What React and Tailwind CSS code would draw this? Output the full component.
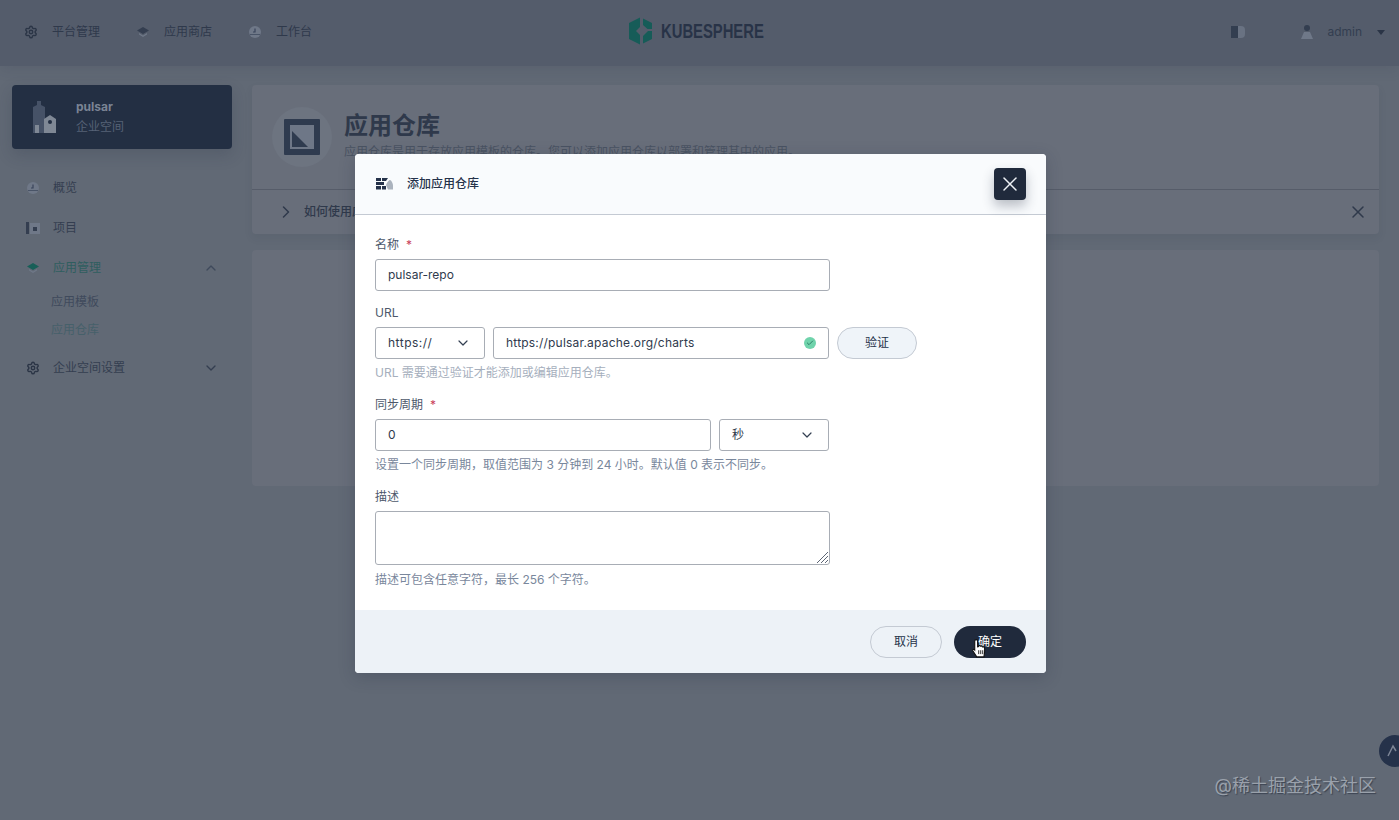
import { ChevronDown, ChevronUp, ChevronRight, X, Check, Settings } from "lucide-react";

function Label({ children, required }) {
  return (
    <div className="h-5 mb-[5px] text-[12px] leading-[22px] text-[#4d586b]">
      {children}
      {required && <span className="ml-[7px] text-[#c9405a]">*</span>}
    </div>
  );
}

function Hint({ children, light, className = "" }) {
  return (
    <div className={`h-5 text-[12px] leading-5 ${light ? "text-[#a6afbd]" : "text-[#79879c]"} ${className}`}>
      {children}
    </div>
  );
}

function Select({ value, className = "" }) {
  return (
    <div className={`w-[110px] h-8 flex items-center justify-between pl-3 pr-[13px] rounded-[3px] border border-[#a8adb5] text-[12px] text-[#2f3a4d] ${className}`}>
      <span>{value}</span>
      <ChevronDown size={16} strokeWidth={1.8} className="text-[#333f52]" />
    </div>
  );
}

function TextField({ value, className = "", children }) {
  return (
    <div className={`h-8 flex items-center justify-between px-3 rounded-[3px] border border-[#a8adb5] text-[12px] text-[#2f3a4d] ${className}`}>
      <span>{value}</span>
      {children}
    </div>
  );
}

function NavItem({ icon, label, active, chevron }) {
  return (
    <div className="h-10 flex items-center pl-[25px] pr-[25px]">
      <span className="w-[16px] h-[16px] flex items-center justify-center">{icon}</span>
      <span className={`ml-3 text-[12px] ${active ? "text-[#2f5e5f]" : "text-[#343e50]"}`}>{label}</span>
      {chevron === "up" && <ChevronUp size={16} className="ml-auto text-[#3f4a5b]" />}
      {chevron === "down" && <ChevronDown size={16} className="ml-auto text-[#343e50]" />}
    </div>
  );
}

function DotIcon() {
  return (
    <svg width="14" height="14" viewBox="0 0 14 14">
      <circle cx="7" cy="7" r="6" fill="#6f7888" />
      <path d="M7 3.500v3.500H5" stroke="#39445a" strokeWidth="1.2" fill="none" />
      <path d="M2 9.500h10" stroke="#495467" strokeWidth="1" />
    </svg>
  );
}

function CapIcon({ color = "#343e50" }) {
  return (
    <svg width="14" height="14" viewBox="0 0 14 14">
      <path d="M7 2l6 3.500L7 9 1 5.500z" fill={color} />
      <path d="M3 9.500L7 12l4-2.500V8L7 10.500 3 8z" fill="#6f7888" />
    </svg>
  );
}

export default function App() {
  return (
    <div
      className="relative w-full h-screen overflow-hidden bg-[#616975]"
      style={{ fontFamily: 'Inter, "Noto Sans CJK SC", sans-serif' }}
    >
      {/* top bar */}
      <header className="relative h-[66px] flex items-center justify-between bg-[#545c6b] pl-6 pr-[14px] pb-[2px] shadow-[0_4px_12px_rgba(40,50,70,0.12)]">
        <nav className="flex items-center gap-9 text-[12px] text-[#2f394b]">
          <div className="flex items-center gap-[14px]">
            <Settings size={14} strokeWidth={2.4} className="text-[#2b3546]" />
            <span>平台管理</span>
          </div>
          <div className="flex items-center gap-[14px]">
            <CapIcon />
            <span>应用商店</span>
          </div>
          <div className="flex items-center gap-[14px]">
            <DotIcon />
            <span>工作台</span>
          </div>
        </nav>
        <div className="absolute left-[628px] top-[17px] flex items-center gap-[8px]">
          <svg width="25" height="28" viewBox="0 0 25 28">
            <path d="M12 0.500L1 6v16l11 5.500V18l-4-4 4-4z" fill="#165c58" />
            <path d="M15 1.500l9 4.500v6h-4.500L15 8z" fill="#165c58" />
            <path d="M20 14h4v8l-9 4.500V19z" fill="#165c58" />
          </svg>
          <span
            className="text-[20px] leading-7 font-bold text-[#283347] scale-x-[0.74] origin-left"
            style={{ fontFamily: '"Liberation Sans", sans-serif' }}
          >
            KUBESPHERE
          </span>
        </div>
        <div className="flex items-center text-[12px] text-[#333e50]">
          <svg width="14" height="12" viewBox="0 0 14 12">
            <rect x="0" y="0" width="7" height="12" fill="#333e50" />
            <path d="M7 0h3a4 4 0 014 4v4a4 4 0 01-4 4H7z" fill="#697282" />
          </svg>
          <svg className="ml-[55px]" width="14" height="16" viewBox="0 0 14 16">
            <circle cx="7" cy="4" r="3" fill="#333e50" />
            <path d="M1 15l3-7h6l3 7z" fill="#6f7888" />
          </svg>
          <span className="ml-[13px]">admin</span>
          <span className="ml-[15px] w-0 h-0 border-x-[4px] border-x-transparent border-t-[5px] border-t-[#2a3446]" />
        </div>
      </header>

      <div className="flex pt-[19px] pl-3 pr-5">
        {/* sidebar */}
        <aside className="w-[220px] shrink-0">
          <div className="h-16 flex items-center pl-[19px] rounded-[4px] bg-[#232f43] shadow-[0_6px_16px_rgba(35,45,65,0.2)]">
            <svg width="26" height="36" viewBox="0 0 26 36">
              <path d="M2 34V8l4-2V2h4v4l4 2v26z" fill="#465267" />
              <rect x="4" y="26" width="4" height="8" fill="#7f8895" />
              <path d="M13 34V20l6-4 6 4v14z" fill="#7f8895" />
              <circle cx="19" cy="23" r="2" fill="#232f43" />
            </svg>
            <div className="ml-[19px]">
              <div className="text-[12px] leading-5 font-bold text-[#7b8494]">pulsar</div>
              <div className="text-[12px] leading-5 text-[#566276]">企业空间</div>
            </div>
          </div>
          <div className="mt-[19px] -mx-3 w-[244px]">
            <NavItem icon={<DotIcon />} label="概览" />
            <NavItem
              icon={
                <svg width="14" height="14" viewBox="0 0 14 14">
                  <rect x="0" y="1" width="3" height="12" fill="#343e50" />
                  <rect x="4" y="2" width="10" height="11" fill="#6f7888" />
                  <rect x="7" y="6" width="4" height="4" fill="#343e50" />
                </svg>
              }
              label="项目"
            />
            <NavItem icon={<CapIcon color="#185f58" />} label="应用管理" active chevron="up" />
            <div className="pl-[51px] pb-1 text-[12px]">
              <div className="h-7 leading-7 text-[#3f4a5c]">应用模板</div>
              <div className="h-7 leading-7 text-[#46606a]">应用仓库</div>
            </div>
            <NavItem icon={<Settings size={14} strokeWidth={2.4} className="text-[#2b3546]" />} label="企业空间设置" chevron="down" />
          </div>
        </aside>

        {/* main */}
        <main className="flex-1 ml-5">
          <section className="h-[149px] rounded-[4px] bg-[#686e7a] shadow-[0_4px_8px_rgba(40,50,70,0.08)]">
            <div className="h-[105px] flex items-center pl-5 border-b border-[#565c69]">
              <div className="w-[60px] h-[60px] rounded-[50%] bg-[#6d7480] flex items-center justify-center">
                <svg width="36" height="36" viewBox="0 0 36 36">
                  <rect x="0" y="0" width="36" height="36" rx="1" fill="#2f3b4f" />
                  <rect x="6" y="6" width="24" height="24" fill="#6e7787" />
                  <path d="M8 12l16 16H8z" fill="#2f3b4f" />
                </svg>
              </div>
              <div className="ml-3">
                <div className="text-[24px] leading-8 -mt-[5px] font-bold text-[#2f394b]">应用仓库</div>
                <div className="text-[12px] leading-4 mt-[2px] text-[#4a5362]">应用仓库是用于存放应用模板的仓库。您可以添加应用仓库以部署和管理其中的应用。</div>
              </div>
            </div>
            <div className="h-[43px] flex items-center pl-[24px] pr-[11px] text-[12px] font-medium text-[#2f394b]">
              <ChevronRight size={20} strokeWidth={1.8} className="text-[#2f394b]" />
              <span className="ml-2">如何使用应用仓库？</span>
              <X size={20} strokeWidth={1.8} className="ml-auto text-[#2f394b]" />
            </div>
          </section>
          <section className="mt-4 h-[236px] rounded-[4px] bg-[#686e7a]" />
        </main>
      </div>

      {/* dialog */}
      <div className="absolute left-[355px] top-[154px] w-[691px] h-[519px] flex flex-col rounded-[4px] bg-white overflow-hidden shadow-[0_4px_16px_rgba(35,45,65,0.25)]">
        <div className="h-[61px] shrink-0 flex items-center pl-[21px] bg-[#f9fbfd] border-b border-[#c4cad3]">
          <svg width="17" height="12" viewBox="0 0 17 12">
            <path d="M0 0h5v3H0zM6 0h6L10 3H6zM0 4h8v3H0zM0 8h5v3.500H0zM6 8h4v3.500H6z" fill="#25324a" />
            <path d="M10 7c1-3 3-5 4-5s3 3 3 6v3.500h-5z" fill="#abb3be" />
          </svg>
          <span className="ml-[14px] text-[12px] font-medium text-[#25324a]">添加应用仓库</span>
        </div>

        <div className="flex-1 pt-[19px] pl-5">
          <div className="w-[455px]">
            <Label required>名称</Label>
            <TextField value="pulsar-repo" />
          </div>
          <div className="mt-[11px]">
            <Label>URL</Label>
            <div className="flex items-center gap-2">
              <Select value="https://" className="tracking-[0.5px]" />
              <TextField value="https://pulsar.apache.org/charts" className="w-[336px] tracking-[0.2px]">
                <span className="w-3 h-3 rounded-full bg-[#6fd3ab] flex items-center justify-center">
                  <Check size={8} strokeWidth={3} className="text-[#2f7f68]" />
                </span>
              </TextField>
              <div className="w-20 h-8 flex items-center justify-center rounded-full border border-[#c4cad3] bg-[#eff4f9] text-[12px] text-[#25324a]">
                验证
              </div>
            </div>
            <Hint light className="mt-1">URL 需要通过验证才能添加或编辑应用仓库。</Hint>
          </div>
          <div className="mt-[11px]">
            <Label required>同步周期</Label>
            <div className="flex items-center gap-2">
              <TextField value="0" className="w-[336px]" />
              <Select value="秒" />
            </div>
            <Hint className="mt-1">设置一个同步周期，取值范围为 3 分钟到 24 小时。默认值 0 表示不同步。</Hint>
          </div>
          <div className="mt-[11px]">
            <Label>描述</Label>
            <div className="relative w-[455px] h-[54px] rounded-[3px] border border-[#a8adb5]">
              <svg className="absolute right-0 bottom-0" width="14" height="14" viewBox="0 0 14 14">
                <path d="M13 2L2 13M13 6l-7 7M13 10l-3 3" stroke="#5d6675" strokeWidth="1" />
              </svg>
            </div>
            <Hint className="mt-[5px]">描述可包含任意字符，最长 256 个字符。</Hint>
          </div>
        </div>

        <div className="h-[63px] shrink-0 flex items-center justify-end gap-3 pr-5 bg-[#edf2f7]">
          <div className="w-[72px] h-8 flex items-center justify-center rounded-full border border-[#c4cad3] text-[12px] text-[#25324a]">
            取消
          </div>
          <div className="w-[72px] h-8 flex items-center justify-center rounded-full bg-[#202a3c] text-[12px] text-white">
            确定
          </div>
        </div>
      </div>

      {/* dialog close */}
      <div className="absolute left-[994px] top-[168px] w-8 h-8 flex items-center justify-center rounded-[4px] bg-[#202a3c] shadow-[0_6px_12px_rgba(35,45,65,0.3)]">
        <X size={24} strokeWidth={1.5} className="text-[#eef1f5]" />
      </div>

      {/* mouse pointer */}
      <svg className="absolute left-[971px] top-[638px]" width="17" height="20" viewBox="0 0 14 18">
        <path
          d="M4 1.500c.8 0 1.300.6 1.300 1.400V8l1-.2V7c.8-.5 1.500-.3 1.800.5.8-.4 1.500-.2 1.800.6.8-.3 1.600 0 1.700 1v3.400L11 17H4.500L1 11.500c-.4-.8.500-1.700 1.300-1l.4.400V2.900c0-.8.500-1.400 1.300-1.400z"
          fill="#ffffff"
          stroke="#111"
          strokeWidth="1"
        />
        <path d="M6.300 11v3.500M8.100 11v3.500M9.900 11v3.500" stroke="#111" strokeWidth="0.8" />
      </svg>

      {/* help button */}
      <div className="absolute left-[1379px] top-[735px] w-8 h-8 flex items-center pl-[8px] rounded-full bg-[#25324a]">
        <svg width="12" height="14" viewBox="0 0 12 14">
          <path d="M1 12L6 2l3 5" stroke="#7d8696" strokeWidth="1.500" fill="none" />
        </svg>
      </div>

      {/* watermark */}
      <div className="absolute right-[23px] top-[774px] text-[18px] leading-6 text-[#9aa1ab] [text-shadow:1px_1px_1px_#3b4351]">
        @稀土掘金技术社区
      </div>
    </div>
  );
}
